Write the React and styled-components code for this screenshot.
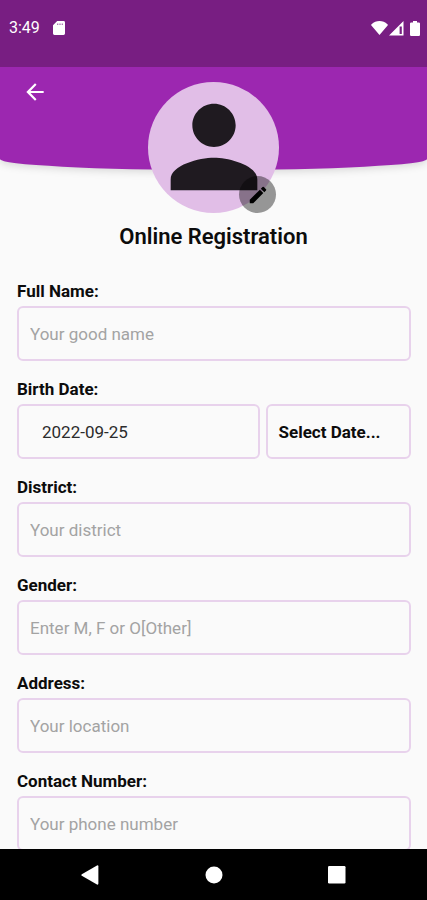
import React, { useState } from 'react';
import styled, { createGlobalStyle } from 'styled-components';
import { MdArrowBack, MdEdit, MdPerson } from 'react-icons/md';

const GlobalStyle = createGlobalStyle`
  *, *::before, *::after {
    box-sizing: border-box;
  }
  body {
    margin: 0;
    background: #fafafa;
    font-family: Roboto, sans-serif;
  }
  button, input {
    font-family: inherit;
  }
`;

const Screen = styled.div`
  display: flex;
  flex-direction: column;
  height: 100vh;
  overflow: hidden;
  color: #0c0c0c;
  background: #fafafa;
`;
const StatusBar = styled.div`
  flex: none;
  display: flex;
  justify-content: space-between;
  padding: 18px 7px 29px 9px;
  color: #fff;
  background: #781e82;
`;
const StatusGroup = styled.div`
  display: flex;
  align-items: center;
  gap: ${({ $gap }) => $gap}px;
  height: 20px;
`;
const Time = styled.span`
  font-size: 16px;
  line-height: 20px;
`;
const BatterySlot = styled.span`
  display: flex;
  padding-left: 5px;
`;
const Content = styled.main`
  flex: 1;
  min-height: 0;
  overflow: hidden;
`;
const Header = styled.header`
  height: 103px;
  padding: 12px 22px;
  border-radius: 0 0 50% 50% / 0 0 11px 11px;
  background: #9c27b0;
  box-shadow: 0 2px 8px rgba(0, 0, 0, 0.15);
`;
const BackButton = styled.button`
  display: flex;
  padding: 0;
  border: 0;
  color: #fff;
  background: none;
  font-size: 26px;
`;
const Profile = styled.section`
  display: flex;
  flex-direction: column;
  align-items: center;
  margin-top: -88px;
`;
const Avatar = styled.div`
  position: relative;
  display: flex;
  justify-content: center;
  width: 131px;
  height: 131px;
  border-radius: 50%;
  color: #1f1a20;
  background: #e1bee7;
  font-size: 130px;
`;
const EditButton = styled.button`
  position: absolute;
  right: 3px;
  bottom: 0;
  display: flex;
  justify-content: center;
  align-items: center;
  width: 37px;
  height: 37px;
  padding: 0;
  border: 0;
  border-radius: 50%;
  color: #000;
  background: rgba(0, 0, 0, 0.4);
  font-size: 22px;
`;
const Title = styled.h1`
  margin: 10px 0 0;
  font-size: 22px;
  font-weight: 600;
  line-height: 28px;
`;
const Form = styled.form`
  display: flex;
  flex-direction: column;
  gap: 17px;
  padding: 29px 16px 16px 17px;
`;
const Field = styled.div`
  display: flex;
  flex-direction: column;
  gap: 4px;
`;
const Label = styled.label`
  font-size: 17px;
  font-weight: 700;
  line-height: 22px;
`;
const DateRow = styled.div`
  display: grid;
  grid-template-columns: 5fr 3fr;
  gap: 6px;
`;
const TextInput = styled.input`
  width: 100%;
  height: 55px;
  padding: 0 ${({ $inset }) => $inset || 11}px;
  border: 2px solid #e8d2ec;
  border-radius: 6px;
  color: #2c2c2c;
  background: transparent;
  font-size: 17px;
  outline: none;

  &::placeholder {
    color: #a3a3a3;
    opacity: 1;
  }
`;
const DateButton = styled.button`
  height: 55px;
  padding: 0 11px;
  border: 2px solid #e8d2ec;
  border-radius: 6px;
  color: #0c0c0c;
  background: transparent;
  font-size: 17px;
  font-weight: 700;
  text-align: left;
`;
const NavBar = styled.nav`
  flex: none;
  display: flex;
  height: 51px;
  padding: 0 28px;
  background: #000;
`;
const NavButton = styled.button`
  flex: 1;
  display: flex;
  justify-content: center;
  align-items: center;
  padding: 0;
  border: 0;
  color: #fff;
  background: none;
`;

function SdCardIcon() {
  return (
    <svg width="12" height="14" viewBox="0 0 12 14" fill="currentColor" aria-hidden="true">
      <path fillRule="evenodd" d="M4.2 0H10.6Q12 0 12 1.4V12.6Q12 14 10.6 14H1.4Q0 14 0 12.6V4.2ZM4.4 2.4V4H5.2V2.4ZM6.6 2.4V4H7.4V2.4ZM8.8 2.4V4H9.6V2.4Z" />
    </svg>
  );
}

function WifiIcon() {
  return (
    <svg width="17" height="14" viewBox="0 0 17 14" fill="currentColor" aria-hidden="true">
      <path d="M8.5 14L.4 4.6Q-.2 3.8 .6 3.2Q4 0 8.5 0T16.4 3.2Q17.2 3.8 16.6 4.6Z" />
    </svg>
  );
}

function SignalIcon() {
  return (
    <svg width="15" height="15" viewBox="0 0 15 15" fill="currentColor" aria-hidden="true">
      <path fillRule="evenodd" d="M14.5 0V14.5H0ZM10.6 5.6V13H12.8V5.6Z" />
    </svg>
  );
}

function BatteryIcon() {
  return (
    <svg width="10" height="15" viewBox="0 0 10 15" fill="currentColor" aria-hidden="true">
      <path d="M3 0H7V1.4H8.8Q10 1.4 10 2.6V13.8Q10 15 8.8 15H1.2Q0 15 0 13.8V2.6Q0 1.4 1.2 1.4H3Z" />
    </svg>
  );
}

function TextField({ id, label, placeholder, type = 'text' }) {
  return (
    <Field>
      <Label htmlFor={id}>{label}</Label>
      <TextInput id={id} type={type} placeholder={placeholder} />
    </Field>
  );
}

function App() {
  const [birthDate, setBirthDate] = useState('2022-09-25');

  return (
    <>
      <GlobalStyle />
      <Screen>
        <StatusBar>
          <StatusGroup $gap={13}>
            <Time>3:49</Time>
            <SdCardIcon />
          </StatusGroup>
          <StatusGroup $gap={1}>
            <WifiIcon />
            <SignalIcon />
            <BatterySlot>
              <BatteryIcon />
            </BatterySlot>
          </StatusGroup>
        </StatusBar>
        <Content>
          <Header>
            <BackButton type="button" aria-label="Back">
              <MdArrowBack />
            </BackButton>
          </Header>
          <Profile>
            <Avatar>
              <MdPerson />
              <EditButton type="button" aria-label="Edit photo">
                <MdEdit />
              </EditButton>
            </Avatar>
            <Title>Online Registration</Title>
          </Profile>
          <Form>
            <TextField id="name" label="Full Name:" placeholder="Your good name" />
            <Field>
              <Label htmlFor="birth-date">Birth Date:</Label>
              <DateRow>
                <TextInput
                  id="birth-date"
                  $inset={23}
                  value={birthDate}
                  onChange={(e) => setBirthDate(e.target.value)}
                />
                <DateButton type="button">Select Date...</DateButton>
              </DateRow>
            </Field>
            <TextField id="district" label="District:" placeholder="Your district" />
            <TextField id="gender" label="Gender:" placeholder="Enter M, F or O[Other]" />
            <TextField id="address" label="Address:" placeholder="Your location" />
            <TextField id="contact" label="Contact Number:" placeholder="Your phone number" type="tel" />
          </Form>
        </Content>
        <NavBar>
          <NavButton type="button" aria-label="Back">
            <svg width="18" height="20" viewBox="0 0 18 20" fill="currentColor">
              <path d="M16 .4Q17.4-.2 17.4 1.4V18.6Q17.4 20.2 16 19.6L.8 10.8Q-.2 10 .8 9.2Z" />
            </svg>
          </NavButton>
          <NavButton type="button" aria-label="Home">
            <svg width="18" height="18" viewBox="0 0 18 18" fill="currentColor">
              <circle cx="9" cy="9" r="8.5" />
            </svg>
          </NavButton>
          <NavButton type="button" aria-label="Recent apps">
            <svg width="18" height="18" viewBox="0 0 18 18" fill="currentColor">
              <rect width="17.5" height="17.5" rx="1.2" />
            </svg>
          </NavButton>
        </NavBar>
      </Screen>
    </>
  );
}

export default App;
